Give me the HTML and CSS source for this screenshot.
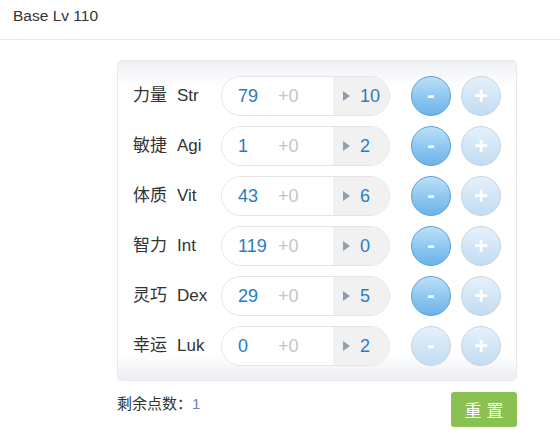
FILE: index.html
```
<!DOCTYPE html>
<html>
<head>
<meta charset="utf-8">
<link rel="stylesheet" href="styles.css">
</head>
<body>
<div class="header">Base Lv 110</div>
<div class="main">
  <div class="panel">
    <div class="row">
      <div class="label"><span class="cn">力量</span><span class="en">Str</span></div>
      <div class="pill"><div class="left"><span class="base">79</span><span class="add">+0</span></div><div class="right"><span class="tri"></span><span class="val">10</span></div></div>
      <div class="btns"><span class="btn minus">-</span><span class="btn plus off">+</span></div>
    </div>
    <div class="row">
      <div class="label"><span class="cn">敏捷</span><span class="en">Agi</span></div>
      <div class="pill"><div class="left"><span class="base">1</span><span class="add">+0</span></div><div class="right"><span class="tri"></span><span class="val">2</span></div></div>
      <div class="btns"><span class="btn minus">-</span><span class="btn plus off">+</span></div>
    </div>
    <div class="row">
      <div class="label"><span class="cn">体质</span><span class="en">Vit</span></div>
      <div class="pill"><div class="left"><span class="base">43</span><span class="add">+0</span></div><div class="right"><span class="tri"></span><span class="val">6</span></div></div>
      <div class="btns"><span class="btn minus">-</span><span class="btn plus off">+</span></div>
    </div>
    <div class="row">
      <div class="label"><span class="cn">智力</span><span class="en">Int</span></div>
      <div class="pill"><div class="left"><span class="base">119</span><span class="add">+0</span></div><div class="right"><span class="tri"></span><span class="val">0</span></div></div>
      <div class="btns"><span class="btn minus">-</span><span class="btn plus off">+</span></div>
    </div>
    <div class="row">
      <div class="label"><span class="cn">灵巧</span><span class="en">Dex</span></div>
      <div class="pill"><div class="left"><span class="base">29</span><span class="add">+0</span></div><div class="right"><span class="tri"></span><span class="val">5</span></div></div>
      <div class="btns"><span class="btn minus">-</span><span class="btn plus off">+</span></div>
    </div>
    <div class="row">
      <div class="label"><span class="cn">幸运</span><span class="en">Luk</span></div>
      <div class="pill"><div class="left"><span class="base">0</span><span class="add">+0</span></div><div class="right"><span class="tri"></span><span class="val">2</span></div></div>
      <div class="btns"><span class="btn minus off">-</span><span class="btn plus off">+</span></div>
    </div>
  </div>
  <div class="footer">
    <div class="points">剩余点数：<span class="num">1</span></div>
    <div class="reset">重置</div>
  </div>
</div>
</body>
</html>
```
FILE: styles.css
```
* { box-sizing: border-box; }
body {
  margin: 0;
  font-family: "Liberation Sans", Arial, "Noto Sans CJK SC", sans-serif;
  color: #333;
  background: #fff;
}
.header {
  height: 40px;
  padding: 7px 13px 0;
  font-size: 15.5px;
  line-height: 18px;
  border-bottom: 1px solid #ebebeb;
}
.main {
  margin: 20px 0 0 117px;
  width: 400px;
}
.panel {
  border: 1px solid #e8e9ec;
  border-radius: 5px;
  padding: 15px 15px 14px;
  display: flex;
  flex-direction: column;
  gap: 10px;
  background: linear-gradient(to bottom, #eef0f4 0px, #ffffff 26px, #ffffff calc(100% - 26px), #eceef3 100%);
}
.row {
  display: flex;
  align-items: center;
  height: 40px;
}
.label {
  width: 88px;
  font-size: 17px;
  line-height: 24px;
  white-space: nowrap;
}
.label .cn { margin-right: 10px; }
.pill {
  width: 169px;
  height: 40px;
  border: 1px solid #e4e4e4;
  border-radius: 20px;
  display: flex;
  overflow: hidden;
  font-size: 18px;
}
.pill .left {
  width: 111px;
  display: flex;
  align-items: center;
  padding-left: 16px;
  background: #fff;
}
.pill .base { width: 40px; color: #2b7cc4; }
.pill .add { color: #c4c4c4; }
.pill .right {
  flex: 1;
  display: flex;
  align-items: center;
  padding-left: 10px;
  background: #f1f1f1;
}
.tri {
  width: 0;
  height: 0;
  border-top: 5px solid transparent;
  border-bottom: 5px solid transparent;
  border-left: 7px solid #8ea0b4;
  margin-right: 10px;
}
.val { color: #2b7cc4; }
.btns {
  display: flex;
  gap: 10px;
  margin-left: 21px;
}
.btn {
  width: 40px;
  height: 40px;
  border-radius: 50%;
  display: flex;
  align-items: center;
  justify-content: center;
  color: #fff;
  font-weight: bold;
  font-size: 24px;
  line-height: 1;
  border: 1px solid #5d9fd3;
  background: linear-gradient(to bottom, #bde0f8 0%, #90c8f1 50%, #6cb3ea 100%);
}
.btn.minus { padding-bottom: 2px; font-size: 22px; }
.btn.off {
  border: 1px solid #c9d3dc;
  background: linear-gradient(to bottom, #e6f1fb 0%, #d2e6f6 50%, #c2dcf2 100%);
}
.footer {
  display: flex;
  justify-content: space-between;
  align-items: flex-start;
  margin-top: 11px;
}
.points {
  font-size: 15px;
  padding-top: 3px;
  line-height: 18px;
}
.points .num { color: #6b7fbf; }
.reset {
  width: 66px;
  height: 35px;
  border-radius: 3px;
  background: #8bc152;
  color: #fff;
  font-size: 17px;
  letter-spacing: 5px;
  padding-left: 5px;
  display: flex;
  align-items: center;
  justify-content: center;
}
```
